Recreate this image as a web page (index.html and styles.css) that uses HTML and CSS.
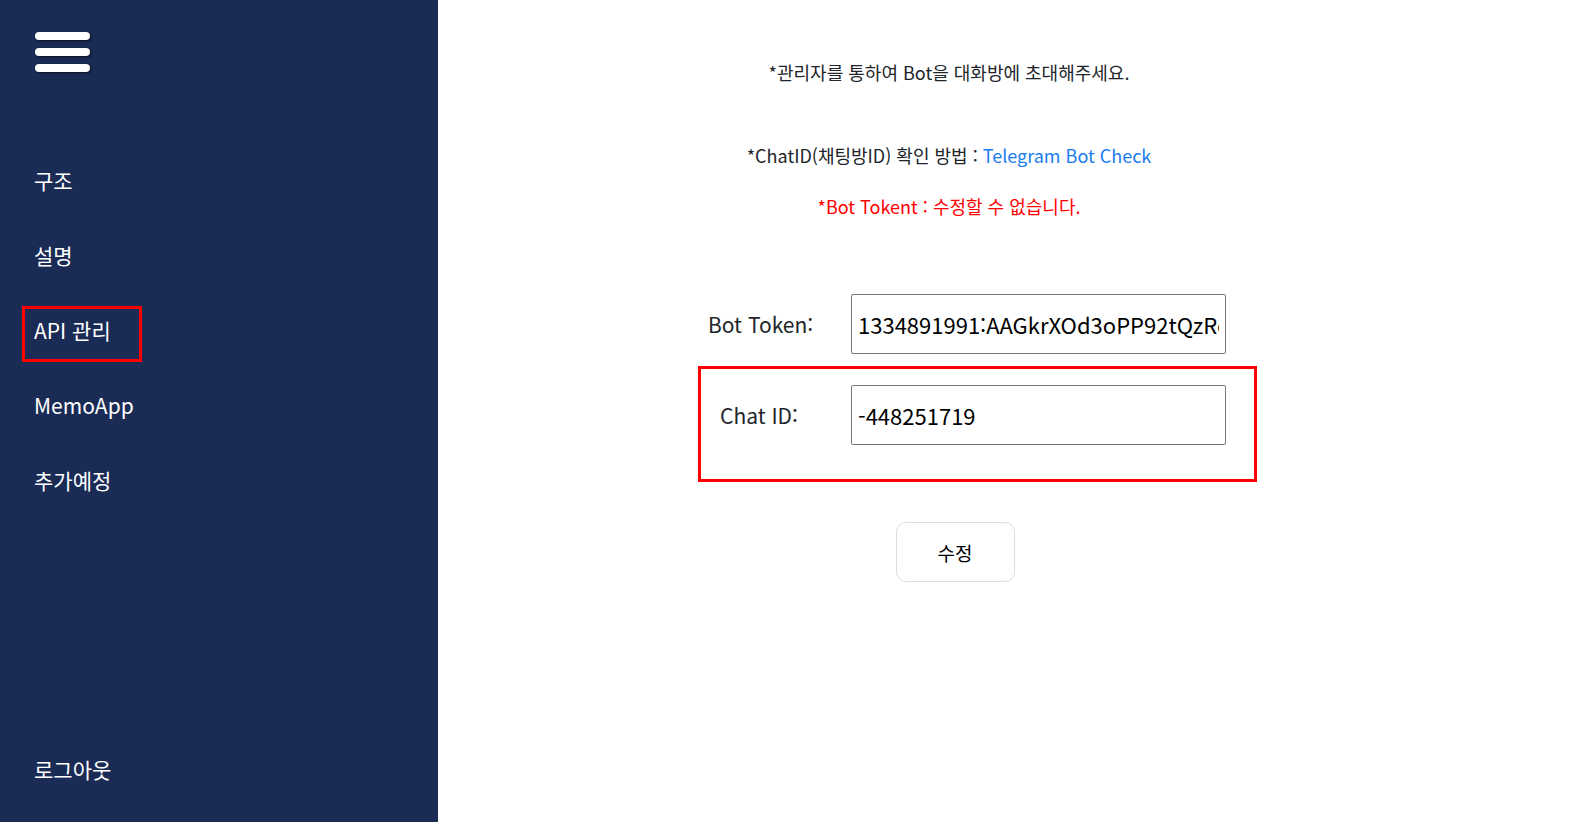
FILE: index.html
```html
<!DOCTYPE html>
<html lang="ko">
<head>
<meta charset="utf-8">
<title>API 관리</title>
<link rel="stylesheet" href="styles.css">
</head>
<body>
<div class="app">
  <aside class="sidebar">
    <div class="burger">
      <span class="bar"></span>
      <span class="bar"></span>
      <span class="bar"></span>
    </div>
    <nav class="menu">
      <a class="item">구조</a>
      <a class="item">설명</a>
      <a class="item active">API 관리</a>
      <a class="item">MemoApp</a>
      <a class="item">추가예정</a>
    </nav>
    <a class="item logout">로그아웃</a>
  </aside>
  <main class="main">
    <p class="note note1">*관리자를 통하여 Bot을 대화방에 초대해주세요.</p>
    <p class="note note2">*ChatID(채팅방ID) 확인 방법 : <span class="link">Telegram Bot Check</span></p>
    <p class="note warn">*Bot Tokent : 수정할 수 없습니다.</p>
    <div class="form">
      <div class="row row-token">
        <label class="label">Bot Token:</label>
        <input class="field" type="text" value="1334891991:AAGkrXOd3oPP92tQzRcVXhE" readonly>
      </div>
      <div class="row row-chat">
        <label class="label">Chat ID:</label>
        <input class="field" type="text" value="-448251719">
      </div>
    </div>
    <button class="btn">수정</button>
  </main>
</div>
</body>
</html>
```

FILE: styles.css
```css
* { box-sizing: border-box; }
html, body { margin: 0; padding: 0; height: 100%; }
body {
  font-family: "Noto Sans CJK KR", "Noto Sans", sans-serif;
  background: #ffffff;
  color: #212529;
}
.app { display: flex; height: 822px; }

.sidebar {
  width: 438px;
  flex: none;
  background: #1a2c56;
  display: flex;
  flex-direction: column;
  padding: 32px 0 21px 22px;
}
.burger {
  display: flex;
  flex-direction: column;
  gap: 8px;
  margin-left: 13px;
  width: 55px;
}
.bar {
  display: block;
  height: 8px;
  border-radius: 4px;
  background: #ffffff;
  box-shadow: 1px 1px 2px rgba(0,0,0,0.7);
}
.menu {
  display: flex;
  flex-direction: column;
  gap: 19px;
  margin-top: 84px;
}
.item {
  display: flex;
  align-items: center;
  width: 120px;
  height: 56px;
  padding: 0 0 8px 9px;
  border: 3px solid transparent;
  color: #ffffff;
  font-size: 21px;
  text-decoration: none;
  white-space: nowrap;
}
.item.active { border-color: #ff0000; }
.logout { margin-top: auto; }

.main {
  flex: 1;
  display: flex;
  flex-direction: column;
  align-items: center;
  padding: 60px 114px 0 0;
}
.note {
  margin: 0;
  font-size: 18px;
  line-height: 24px;
}
.note2 { margin-top: 59px; }
.warn { margin-top: 27px; color: #ff0000; }
.link { color: #1a7cf0; }

.form {
  align-self: flex-start;
  margin-left: 260px;
  margin-top: 76px;
  width: 559px;
  display: flex;
  flex-direction: column;
  gap: 12px;
}
.row {
  display: flex;
  align-items: flex-start;
}
.row-token { padding-left: 10px; }
.row-chat {
  border: 3px solid #ff0000;
  padding: 16px 0 34px 19px;
}
.label {
  font-size: 21px;
  color: #212529;
  line-height: 60px;
}
.row-token .label { width: 143px; }
.row-chat .label { width: 131px; }
.field {
  width: 375px;
  height: 60px;
  border: 1px solid #767676;
  border-radius: 2px;
  padding: 0 6px;
  font-family: inherit;
  font-size: 22px;
  color: #000;
  background: #fff;
  outline: none;
}
.btn {
  margin-top: 40px;
  margin-left: 12px;
  width: 119px;
  height: 60px;
  border: 1px solid #dddddd;
  border-radius: 10px;
  background: #ffffff;
  font-family: inherit;
  font-size: 19px;
  color: #000;
}
```
